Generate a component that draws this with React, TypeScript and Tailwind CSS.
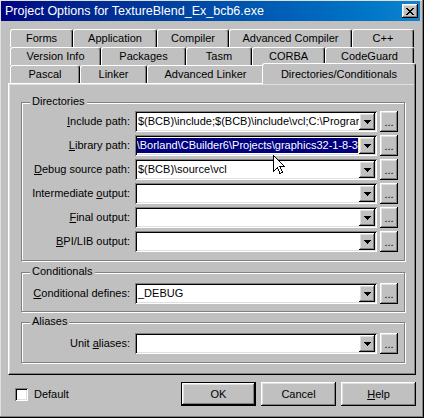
import React from 'react';

// classic win9x bevels
const raised =
  'shadow-[inset_-1px_-1px_0_#000,inset_1px_1px_0_#fff,inset_-2px_-2px_0_#808080,inset_2px_2px_0_#dfdfdf]';
const sunken =
  'shadow-[inset_1px_1px_0_#808080,inset_-1px_-1px_0_#fff,inset_2px_2px_0_#000,inset_-2px_-2px_0_#dfdfdf]';

const tabRows = [
  [
    { label: 'Forms', w: 'w-[63px]' },
    { label: 'Application', w: 'w-[84px]' },
    { label: 'Compiler', w: 'w-[72px]' },
    { label: 'Advanced Compiler', w: 'w-[123px]' },
    { label: 'C++', w: 'w-[62px]' },
  ],
  [
    { label: 'Version Info', w: 'w-[91px]' },
    { label: 'Packages', w: 'w-[85px]' },
    { label: 'Tasm', w: 'w-[66px]' },
    { label: 'CORBA', w: 'w-[73px]' },
    { label: 'CodeGuard', w: 'w-[89px]' },
  ],
  [
    { label: 'Pascal', w: 'w-[70px]' },
    { label: 'Linker', w: 'w-[67px]' },
    { label: 'Advanced Linker', w: 'w-[117px]' },
  ],
];

const Tab = ({ label, w }: { label: string; w: string }) => (
  <div
    className={`${w} h-full shrink-0 flex items-center justify-center border-l border-t border-white border-r border-r-black rounded-t-[3px] shadow-[inset_-1px_0_0_#808080]`}
  >
    {label}
  </div>
);

const DropArrow = () => (
  <svg width="7" height="4" viewBox="0 0 7 4" shapeRendering="crispEdges">
    <path d="M0 0h7v1H0zM1 1h5v1H1zM2 2h3v1H2zM3 3h1v1H3z" fill="#000" />
  </svg>
);

const Combo = ({ children, selected }: { children?: React.ReactNode; selected?: boolean }) => (
  <div className={`ml-[5px] w-[242px] h-[21px] p-[2px] bg-white flex shrink-0 ${sunken}`}>
    <div
      className={`flex-1 min-w-0 overflow-hidden flex items-center whitespace-nowrap pl-[1px] ${
        selected ? 'justify-end' : ''
      }`}
    >
      {children}
    </div>
    <div className={`w-[16px] h-full shrink-0 bg-[#c0c0c0] flex items-center justify-center ${raised}`}>
      <DropArrow />
    </div>
  </div>
);

const Ellipsis = () => (
  <div
    className={`ml-[3px] w-[18px] h-[21px] shrink-0 flex items-center justify-center pt-[2px] leading-none ${raised}`}
  >
    ...
  </div>
);

const Row = ({ label, children, selected }: { label: React.ReactNode; children?: React.ReactNode; selected?: boolean }) => (
  <div className="flex items-center h-[21px]">
    <div className="w-[108px] shrink-0 text-right whitespace-nowrap">{label}</div>
    <Combo selected={selected}>{children}</Combo>
    <Ellipsis />
  </div>
);

const Group = ({ title, className, children }: { title: string; className: string; children: React.ReactNode }) => (
  <div className={`relative border border-[#808080] shadow-[inset_1px_1px_0_#fff,1px_1px_0_#fff] ${className}`}>
    <span className="absolute -top-[8px] left-[8px] px-[2px] bg-[#c0c0c0] leading-[13px]">{title}</span>
    {children}
  </div>
);

const Button = ({ children, primary }: { children: React.ReactNode; primary?: boolean }) => (
  <div
    className={`w-[75px] h-[24px] flex items-center justify-center ${
      primary
        ? 'border border-black shadow-[inset_-1px_-1px_0_#000,inset_1px_1px_0_#fff,inset_-2px_-2px_0_#808080,inset_2px_2px_0_#dfdfdf]'
        : raised
    }`}
  >
    {children}
  </div>
);

export default function App() {
  return (
    <div
      className="relative w-[424px] h-[418px] bg-[#c0c0c0] flex flex-col pt-px pl-px pr-[4px] pb-[4px] text-[11px] leading-[13px] text-black [font-family:'Liberation_Sans',Arial,sans-serif] shadow-[inset_-1px_-1px_0_#000,inset_-2px_-2px_0_#808080,inset_1px_1px_0_#dfdfdf] overflow-hidden"
    >
      {/* title bar */}
      <div className="h-[20px] shrink-0 flex items-center pl-[4px] pr-[2px] bg-linear-to-r from-[#000080] to-[#1084d0] text-white text-[12.5px]">
        <span className="flex-1 whitespace-nowrap">Project Options for TextureBlend_Ex_bcb6.exe</span>
        <div className={`w-[16px] h-[14px] bg-[#c0c0c0] flex items-center justify-center ${raised}`}>
          <svg width="8" height="7" viewBox="0 0 8 7" shapeRendering="crispEdges">
            <path
              d="M0 0h2v1H0zM6 0h2v1H6zM1 1h2v1H1zM5 1h2v1H5zM2 2h4v1H2zM3 3h2v1H3zM2 4h4v1H2zM1 5h2v1H1zM5 5h2v1H5zM0 6h2v1H0zM6 6h2v1H6z"
              fill="#000"
            />
          </svg>
        </div>
      </div>

      {/* tab control */}
      <div className="mt-[8px] ml-[7px] w-[408px]">
        <div className="px-[2px]">
          <div className="flex h-[18px]">
            {tabRows[0].map((t) => (
              <Tab key={t.label} {...t} />
            ))}
          </div>
          <div className="flex h-[18px]">
            {tabRows[1].map((t) => (
              <Tab key={t.label} {...t} />
            ))}
          </div>
          <div className="flex items-end h-[18px]">
            {tabRows[2].map((t) => (
              <Tab key={t.label} {...t} />
            ))}
            <div className="relative z-10 w-[154px] h-[21px] -mx-[2px] -mb-px shrink-0 flex items-center justify-center bg-[#c0c0c0] border-l border-t border-white border-r border-r-black rounded-t-[3px] shadow-[inset_-1px_0_0_#808080]">
              Directories/Conditionals
            </div>
          </div>
        </div>

        <div className="h-[292px] flex flex-col pt-[18px] pl-[12px] pr-[10px] border border-white border-r-black border-b-black shadow-[inset_-1px_-1px_0_#808080,inset_1px_1px_0_#dfdfdf]">
          <Group title="Directories" className="h-[159px] pt-[8px] flex flex-col gap-[3px]">
            <Row
              label={
                <>
                  <u>I</u>nclude path:
                </>
              }
            >
              $(BCB)\include;$(BCB)\include\vcl;C:\Program Files\Borland\CBuilder6\Include
            </Row>
            <Row
              selected
              label={
                <>
                  <u>L</u>ibrary path:
                </>
              }
            >
              <span className="bg-[#000080] text-white leading-[15px]">
                $(BCB)\lib;$(BCB)\lib\obj;C:\Program Files\Borland\CBuilder6\Projects\graphics32-1-8-3
              </span>
              <span className="w-px h-[15px] bg-[#f0f080] shrink-0" />
            </Row>
            <Row
              label={
                <>
                  <u>D</u>ebug source path:
                </>
              }
            >
              $(BCB)\source\vcl
            </Row>
            <Row
              label={
                <>
                  Intermediate <u>o</u>utput:
                </>
              }
            />
            <Row
              label={
                <>
                  <u>F</u>inal output:
                </>
              }
            />
            <Row
              label={
                <>
                  <u>B</u>PI/LIB output:
                </>
              }
            />
          </Group>

          <Group title="Conditionals" className="h-[40px] mt-[11px] pt-[10px]">
            <Row
              label={
                <>
                  <u>C</u>onditional defines:
                </>
              }
            >
              _DEBUG
            </Row>
          </Group>

          <Group title="Aliases" className="h-[41px] mt-[10px] pt-[10px]">
            <Row
              label={
                <>
                  Unit <u>a</u>liases:
                </>
              }
            />
          </Group>
        </div>
      </div>

      {/* bottom buttons */}
      <div className="mt-[7px] h-[24px] flex items-center">
        <div className={`ml-[14px] w-[13px] h-[13px] bg-white ${sunken}`} />
        <span className="ml-[6px]">Default</span>
        <div className="ml-auto mr-[4px] flex gap-[5px]">
          <Button primary>OK</Button>
          <Button>Cancel</Button>
          <Button>
            <span>
              <u>H</u>elp
            </span>
          </Button>
        </div>
      </div>

      {/* mouse pointer */}
      <svg
        className="absolute left-[273px] top-[155px]"
        width="13"
        height="20"
        viewBox="0 0 13 20"
        shapeRendering="crispEdges"
      >
        <path
          d="M0.5 0.5 L0.5 16.5 L4.5 12.5 L7 18.5 L9.5 17.5 L7 11.5 L11.5 11.5 Z"
          fill="#fff"
          stroke="#000"
          strokeWidth="1"
        />
      </svg>
    </div>
  );
}
